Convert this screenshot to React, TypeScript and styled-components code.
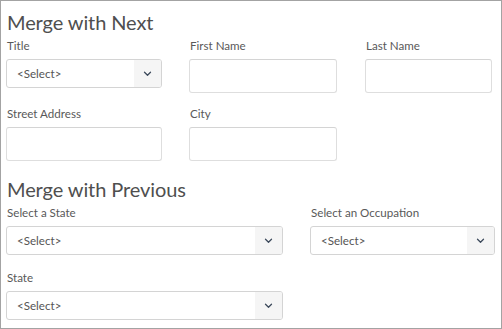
import React from "react";
import styled, { createGlobalStyle } from "styled-components";

const Global = createGlobalStyle`
  html, body { margin: 0; padding: 0; background: #ffffff; }
  body { font-family: Lato, "Open Sans", "Liberation Sans", sans-serif; }
  * { box-sizing: border-box; }
`;

const Frame = styled.div`
  width: 502px;
  height: 329px;
  border: 1px solid #a3a3a3;
  padding: 8px 0 0 5px;
  background: #fff;
  overflow: hidden;
`;

const Heading = styled.h2`
  margin: 0 0 3px 1px;
  font-size: 20px;
  line-height: 26px;
  font-weight: 400;
  color: #4f4f4f;
  letter-spacing: -0.1px;
`;

const Row = styled.div<{ $cols: string; $mb: number }>`
  display: grid;
  grid-template-columns: ${(p) => p.$cols};
  column-gap: 27px;
  align-items: start;
  margin-bottom: ${(p) => p.$mb}px;
`;

const Field = styled.div<{ $shift?: number }>`
  display: flex;
  flex-direction: column;
  margin-left: ${(p) => p.$shift ?? 0}px;
`;

const Label = styled.label`
  font-size: 11.6px;
  line-height: 16px;
  color: #595959;
  margin: 0 0 5px 1px;
`;

const TextInput = styled.div`
  height: 34px;
  border: 1px solid #dedede;
  border-top-color: #d4d4d4;
  border-radius: 3px;
  background: #fff;
`;

const Select = styled.div`
  height: 29px;
  border: 1px solid #d4d4d4;
  border-radius: 3px;
  background: #fff;
  display: flex;
  align-items: stretch;
  overflow: hidden;
`;

const SelectText = styled.span`
  flex: 1;
  display: flex;
  align-items: center;
  padding-left: 10px;
  font-size: 11.6px;
  color: #555;
`;

const ArrowZone = styled.span`
  width: 27px;
  background: #f5f5f5;
  display: flex;
  align-items: center;
  justify-content: center;
`;

const Chevron = () => (
  <svg width="9" height="6" viewBox="0 0 9 6">
    <path d="M1.5 1.2 L4.5 4.2 L7.5 1.2" fill="none" stroke="#3d4a5c" strokeWidth="1.3" strokeLinecap="round" strokeLinejoin="round" />
  </svg>
);

const SelectBox = () => (
  <Select>
    <SelectText>&lt;Select&gt;</SelectText>
    <ArrowZone>
      <Chevron />
    </ArrowZone>
  </Select>
);

export default function App() {
  return (
    <>
      <Global />
      <Frame>
        <Heading>Merge with Next</Heading>
        <Row $cols="156px 148px 128px" $mb={13}>
          <Field>
            <Label>Title</Label>
            <SelectBox />
          </Field>
          <Field>
            <Label>First Name</Label>
            <TextInput />
          </Field>
          <Field $shift={1}>
            <Label>Last Name</Label>
            <TextInput />
          </Field>
        </Row>
        <Row $cols="156px 148px" $mb={15}>
          <Field>
            <Label>Street Address</Label>
            <TextInput />
          </Field>
          <Field>
            <Label>City</Label>
            <TextInput />
          </Field>
        </Row>
        <Heading>Merge with Previous</Heading>
        <Row $cols="277px 185px" $mb={15}>
          <Field>
            <Label>Select a State</Label>
            <SelectBox />
          </Field>
          <Field>
            <Label>Select an Occupation</Label>
            <SelectBox />
          </Field>
        </Row>
        <Row $cols="277px" $mb={0}>
          <Field>
            <Label>State</Label>
            <SelectBox />
          </Field>
        </Row>
      </Frame>
    </>
  );
}
